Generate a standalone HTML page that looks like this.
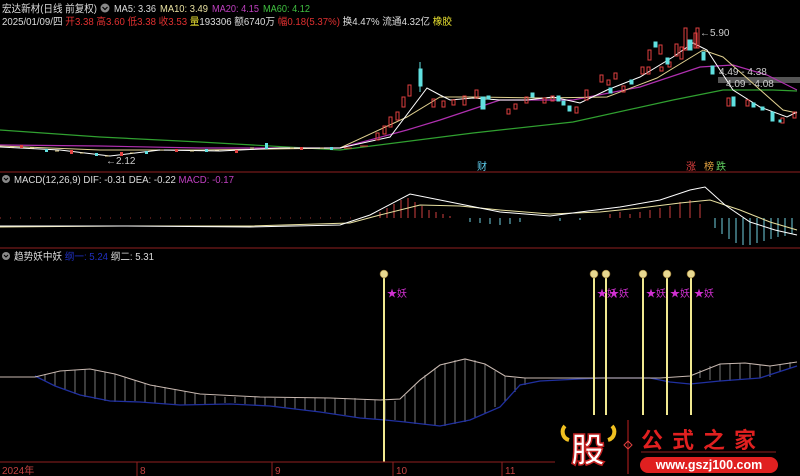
<!DOCTYPE html>
<html><head><meta charset="utf-8"><style>
html,body{margin:0;padding:0;background:#000;width:800px;height:476px;overflow:hidden}
svg{display:block}
text{font-family:"Liberation Sans","Noto Sans CJK SC",sans-serif}
</style></head><body>
<svg width="800" height="476" viewBox="0 0 800 476" xmlns="http://www.w3.org/2000/svg">
<rect width="800" height="476" fill="#000"/>
<!-- header -->
<text x="2" y="12" font-size="10.5" fill="#ddd" textLength="95" lengthAdjust="spacingAndGlyphs">宏达新材(日线 前复权)</text>
<circle cx="105" cy="8" r="4.5" fill="#888"/><path d="M102.5 7l2.5 2.5 2.5-2.5" stroke="#000" stroke-width="1.2" fill="none"/>
<text x="114" y="12" font-size="10" fill="#ddd" textLength="42" lengthAdjust="spacingAndGlyphs">MA5: 3.36</text>
<text x="160" y="12" font-size="10" fill="#e8e0a0" textLength="48" lengthAdjust="spacingAndGlyphs">MA10: 3.49</text>
<text x="212" y="12" font-size="10" fill="#c040c0" textLength="47" lengthAdjust="spacingAndGlyphs">MA20: 4.15</text>
<text x="263" y="12" font-size="10" fill="#40c040" textLength="47" lengthAdjust="spacingAndGlyphs">MA60: 4.12</text>
<text x="2" y="25" font-size="10" fill="#ddd" textLength="450" lengthAdjust="spacingAndGlyphs">2025/01/09/四 <tspan fill="#e03030">开</tspan><tspan fill="#e03030">3.38</tspan> <tspan fill="#e03030">高3.60</tspan> <tspan fill="#e03030">低3.38</tspan> <tspan fill="#e03030">收3.53</tspan> <tspan fill="#e8e030">量</tspan>193306 额6740万 <tspan fill="#e03030">幅</tspan><tspan fill="#e03030">0.18(5.37%)</tspan> 换4.47% 流通4.32亿 <tspan fill="#e8e030">橡胶</tspan></text>

<!-- main chart -->
<rect x="718" y="77" width="82" height="6" fill="#555"/>
<polyline fill="none" stroke="#30a030" stroke-width="1.2" points="0,130 100,137 200,142 340,150 473,133 573,122 673,100 723,90 773,90 797,91"/>
<polyline fill="none" stroke="#b030b0" stroke-width="1.2" points="0,145 100,146 200,148 340,148 407,130 440,120 500,100 573,100 640,87 700,67 733,65 767,75 797,90"/>
<polyline fill="none" stroke="#e0d090" stroke-width="1" points="0,146 100,150 200,150 340,148 407,117 440,97 473,97 540,98 607,97 657,78 703,50 723,57 757,87 783,110 797,113"/>
<polyline fill="none" stroke="#fff" stroke-width="1" points="0,147 60,150 110,156 160,150 220,151 280,148 340,148 390,137 427,88 440,95 450,100 473,98 500,100 527,100 553,97 580,103 607,90 640,77 673,57 693,43 707,50 720,70 733,90 760,107 787,117 797,112"/>
<g stroke="#e04040" fill="none" stroke-width="1">
<rect x="376" y="133" width="3" height="7"/><rect x="383" y="126" width="3" height="8"/><rect x="389" y="117" width="3" height="10"/><rect x="396" y="112" width="3" height="8"/><rect x="402" y="97" width="3" height="10"/><rect x="408" y="85" width="3" height="11"/>
<rect x="432" y="99" width="3" height="8"/><rect x="442" y="101" width="3" height="6"/><rect x="452" y="100" width="3" height="5"/><rect x="463" y="96" width="3" height="9"/><rect x="475" y="90" width="3" height="8"/>
<rect x="507" y="109" width="3" height="5"/><rect x="514" y="104" width="3" height="5"/><rect x="525" y="97" width="3" height="6"/><rect x="543" y="98" width="3" height="5"/><rect x="551" y="96" width="3" height="5"/>
<rect x="575" y="107" width="3" height="6"/><rect x="585" y="90" width="3" height="10"/><rect x="600" y="75" width="3" height="7"/><rect x="607" y="80" width="3" height="5"/><rect x="614" y="73" width="3" height="6"/><rect x="622" y="86" width="3" height="6"/>
<rect x="641" y="67" width="3" height="7"/><rect x="647" y="67" width="3" height="7"/><rect x="660" y="67" width="3" height="4"/><rect x="668" y="62" width="3" height="5"/><rect x="680" y="47" width="3" height="12"/><rect x="659" y="45" width="3" height="9"/>
<rect x="648" y="50" width="3" height="10"/><rect x="675" y="44" width="3" height="12"/><rect x="684" y="28" width="3" height="22"/><rect x="696" y="28" width="3" height="20"/><rect x="694" y="33" width="3" height="15"/>
<rect x="727" y="98" width="3" height="8"/><rect x="746" y="100" width="3" height="6"/><rect x="793" y="112" width="3" height="6"/><rect x="781" y="118" width="3" height="5"/>
<line x1="344" y1="148" x2="352" y2="148"/><line x1="360" y1="146" x2="368" y2="146"/>
</g>
<g fill="#60e0e0" stroke="#60e0e0" stroke-width="1">
<rect x="419" y="69" width="3" height="17"/><line x1="420" y1="62" x2="420" y2="92"/>
<rect x="481" y="97" width="4" height="12"/><rect x="487" y="96" width="3" height="3"/><rect x="531" y="93" width="3" height="4"/><rect x="557" y="96" width="3" height="5"/><rect x="562" y="101" width="3" height="4"/><rect x="568" y="106" width="3" height="5"/>
<rect x="609" y="88" width="3" height="5"/><rect x="630" y="80" width="3" height="4"/><rect x="654" y="42" width="3" height="5"/><rect x="666" y="58" width="3" height="6"/><rect x="688" y="40" width="4" height="10"/>
<rect x="702" y="52" width="3" height="8"/><rect x="711" y="66" width="3" height="8"/><rect x="732" y="97" width="3" height="9"/><rect x="752" y="103" width="3" height="4"/><rect x="761" y="107" width="3" height="3"/><rect x="771" y="112" width="3" height="9"/><rect x="779" y="120" width="2" height="2"/>
</g>
<g stroke="#e0d090" stroke-width="1">
<line x1="10" y1="147" x2="14" y2="147"/><line x1="30" y1="148" x2="34" y2="148"/><line x1="55" y1="151" x2="59" y2="151"/><line x1="80" y1="153" x2="84" y2="153"/><line x1="105" y1="156" x2="109" y2="156"/><line x1="130" y1="153" x2="134" y2="153"/><line x1="160" y1="150" x2="164" y2="150"/><line x1="190" y1="151" x2="194" y2="151"/><line x1="215" y1="150" x2="219" y2="150"/><line x1="250" y1="148" x2="254" y2="148"/><line x1="290" y1="148" x2="294" y2="148"/><line x1="320" y1="148" x2="324" y2="148"/>
</g>
<g fill="#e04040"><rect x="20" y="145" width="3" height="3"/><rect x="70" y="150" width="3" height="4"/><rect x="120" y="152" width="3" height="4"/><rect x="175" y="149" width="3" height="3"/><rect x="235" y="150" width="3" height="3"/><rect x="300" y="147" width="3" height="3"/></g>
<g fill="#60e0e0"><rect x="45" y="149" width="3" height="3"/><rect x="95" y="153" width="3" height="3"/><rect x="145" y="151" width="3" height="3"/><rect x="205" y="149" width="3" height="3"/><rect x="265" y="143" width="3" height="6"/><rect x="330" y="147" width="3" height="3"/></g>
<text x="106" y="164" font-size="10" fill="#ccc">←2.12</text>
<text x="700" y="36" font-size="10" fill="#ccc">←5.90</text>
<text x="719" y="75" font-size="10" fill="#ccc">4.49 - 4.38</text>
<text x="726" y="87" font-size="10" fill="#ccc">4.09 - 4.08</text>
<text x="477" y="170" font-size="10" fill="#60d0f0">财</text>
<text x="686" y="170" font-size="10" fill="#e04040">涨</text>
<text x="704" y="170" font-size="10" fill="#e0a040">榜</text>
<text x="716" y="170" font-size="10" fill="#60d060">跌</text>
<line x1="0" y1="172" x2="800" y2="172" stroke="#902020" stroke-width="1"/>

<!-- MACD -->
<circle cx="6" cy="179" r="4" fill="#888"/><path d="M4 178l2 2 2-2" stroke="#000" stroke-width="1.1" fill="none"/>
<text x="14" y="183" font-size="10" fill="#ddd" textLength="220" lengthAdjust="spacingAndGlyphs">MACD(12,26,9) DIF: -0.31  DEA: -0.22  <tspan fill="#c040c0">MACD: -0.17</tspan></text>
<line x1="0" y1="218" x2="370" y2="218" stroke="#a03030" stroke-dasharray="1 9"/>
<g stroke="#d04040" stroke-width="1">
<line x1="380" y1="218" x2="380" y2="212"/><line x1="387" y1="218" x2="387" y2="208"/><line x1="394" y1="218" x2="394" y2="204"/><line x1="401" y1="218" x2="401" y2="200"/><line x1="408" y1="218" x2="408" y2="198"/><line x1="415" y1="218" x2="415" y2="202"/><line x1="422" y1="218" x2="422" y2="206"/><line x1="429" y1="218" x2="429" y2="210"/><line x1="436" y1="218" x2="436" y2="212"/><line x1="443" y1="218" x2="443" y2="214"/><line x1="450" y1="218" x2="450" y2="216"/>
<line x1="610" y1="218" x2="610" y2="214"/><line x1="620" y1="218" x2="620" y2="212"/><line x1="630" y1="218" x2="630" y2="214"/><line x1="640" y1="218" x2="640" y2="212"/><line x1="650" y1="218" x2="650" y2="210"/><line x1="660" y1="218" x2="660" y2="208"/><line x1="670" y1="218" x2="670" y2="206"/><line x1="680" y1="218" x2="680" y2="202"/><line x1="690" y1="218" x2="690" y2="200"/><line x1="700" y1="218" x2="700" y2="204"/>
</g>
<g stroke="#70d0e0" stroke-width="1">
<line x1="470" y1="218" x2="470" y2="222"/><line x1="480" y1="218" x2="480" y2="223"/><line x1="490" y1="218" x2="490" y2="224"/><line x1="500" y1="218" x2="500" y2="225"/><line x1="510" y1="218" x2="510" y2="224"/><line x1="520" y1="218" x2="520" y2="222"/><line x1="560" y1="218" x2="560" y2="221"/><line x1="580" y1="218" x2="580" y2="220"/>
<line x1="715" y1="218" x2="715" y2="228"/><line x1="722" y1="218" x2="722" y2="234"/><line x1="729" y1="218" x2="729" y2="239"/><line x1="736" y1="218" x2="736" y2="243"/><line x1="743" y1="218" x2="743" y2="245"/><line x1="750" y1="218" x2="750" y2="245"/><line x1="757" y1="218" x2="757" y2="243"/><line x1="764" y1="218" x2="764" y2="241"/><line x1="771" y1="218" x2="771" y2="239"/><line x1="778" y1="218" x2="778" y2="237"/><line x1="785" y1="218" x2="785" y2="236"/><line x1="792" y1="218" x2="792" y2="234"/>
</g>
<polyline fill="none" stroke="#e8e0a0" stroke-width="1" points="0,227 120,226 250,226 350,223 380,215 420,205 460,206 500,210 550,214 600,212 640,208 680,203 710,200 740,210 770,222 797,230"/>
<polyline fill="none" stroke="#fff" stroke-width="1" points="0,226 120,226 250,227 340,225 370,215 410,194 440,200 470,206 500,212 550,216 580,212 620,207 660,200 690,190 705,187 725,205 750,222 775,230 797,235"/>
<line x1="0" y1="248" x2="800" y2="248" stroke="#902020" stroke-width="1"/>

<!-- indicator 3 -->
<circle cx="6" cy="256" r="4" fill="#888"/><path d="M4 255l2 2 2-2" stroke="#000" stroke-width="1.1" fill="none"/>
<text x="14" y="260" font-size="10" fill="#ddd" textLength="140" lengthAdjust="spacingAndGlyphs">趋势妖中妖 <tspan fill="#2030c0">纲一: 5.24</tspan> 纲二: 5.31</text>
<g stroke="#c8c8c8" stroke-width="0.6">
<path d="M45 374V381M55 372V386M65 371V390M75 370V394M85 369V397M95 370V399M105 372V401M115 374V402M125 377V401M135 380V401M145 383V402M155 385V403M165 387V404M175 389V405M185 391V405M195 393V405M205 395V405M215 396V404M225 397V403M235 397V403M245 397V404M255 397V405M265 397V406M275 398V407M285 398V408M295 398V409M305 398V410M315 398V411M325 398V412M335 398V414M345 398V415M355 398V417M365 399V418M375 400V419M385 401V420M395 401V420M405 395V422M415 385V424M425 375V425M435 368V426M445 363V426M455 360V424M465 359V422M475 360V418M485 364V413M495 371V407M505 376V402M515 378V392M525 378V385"/>
<path d="M700 370V378M710 366V380M720 364V381M730 363V381M740 363V380M750 364V379M760 365V378M770 366V377M780 364V372M790 362V368"/>
</g>
<polyline fill="none" stroke="#2030a0" stroke-width="1.3" points="35,376 55,386 80,395 110,401 140,402 180,405 230,404 270,406 320,412 360,418 385,420 405,422 440,426 470,420 500,407 520,385 540,381 600,378 650,378 670,382 690,384 720,381 760,378 797,366"/>
<polyline fill="none" stroke="#c8b8b0" stroke-width="1.1" points="0,377 35,377 60,371 90,369 115,374 150,385 200,394 260,397 330,398 380,400 400,399 420,380 440,365 465,359 485,364 505,376 525,378 600,378 660,378 690,376 720,364 745,363 770,366 797,362"/>
<g stroke="#f0e890" stroke-width="2">
<line x1="384" y1="274" x2="384" y2="462"/>
<line x1="594" y1="274" x2="594" y2="415"/><line x1="606" y1="274" x2="606" y2="415"/><line x1="643" y1="274" x2="643" y2="415"/><line x1="667" y1="274" x2="667" y2="415"/><line x1="691" y1="274" x2="691" y2="415"/>
</g>
<g fill="#e8d890" stroke="#806020" stroke-width="0.6">
<circle cx="384" cy="274" r="4"/><circle cx="594" cy="274" r="4"/><circle cx="606" cy="274" r="4"/><circle cx="643" cy="274" r="4"/><circle cx="667" cy="274" r="4"/><circle cx="691" cy="274" r="4"/>
</g>
<g font-size="10" fill="#d030d0">
<text x="387" y="297">★妖</text><text x="597" y="297">★妖</text><text x="609" y="297">★妖</text><text x="646" y="297">★妖</text><text x="670" y="297">★妖</text><text x="694" y="297">★妖</text>
</g>

<!-- axis -->
<line x1="0" y1="462" x2="555" y2="462" stroke="#902020" stroke-width="1"/>
<g stroke="#902020"><line x1="137" y1="462" x2="137" y2="476"/><line x1="272" y1="462" x2="272" y2="476"/><line x1="393" y1="462" x2="393" y2="476"/><line x1="502" y1="462" x2="502" y2="476"/></g>
<g font-size="10" fill="#c04040"><text x="2" y="474">2024年</text><text x="140" y="474">8</text><text x="275" y="474">9</text><text x="396" y="474">10</text><text x="505" y="474">11</text></g>

<!-- logo -->
<path d="M565 426c-4 4-3 12 4 14M612 426c4 4 3 12-4 14" stroke="#f0c020" stroke-width="4" fill="none"/>
<text x="571" y="462" font-size="34" font-weight="bold" fill="#fff" stroke="#c02020" stroke-width="1.5" font-family="Noto Sans CJK SC,sans-serif">股</text>
<line x1="628" y1="420" x2="628" y2="474" stroke="#c02020"/>
<path d="M628 441l4 4-4 4-4-4z" stroke="#e04040" fill="none"/>
<text x="641" y="448" font-size="22" fill="#e02020" letter-spacing="9" font-family="Noto Serif CJK SC,serif" font-weight="bold">公式之家</text>
<line x1="641" y1="452" x2="776" y2="452" stroke="#902020"/>
<rect x="640" y="457" width="138" height="16" rx="8" fill="#e02020"/>
<text x="709" y="469" font-size="12.5" font-weight="bold" fill="#fff" text-anchor="middle">www.gszj100.com</text>
</svg>
</body></html>
